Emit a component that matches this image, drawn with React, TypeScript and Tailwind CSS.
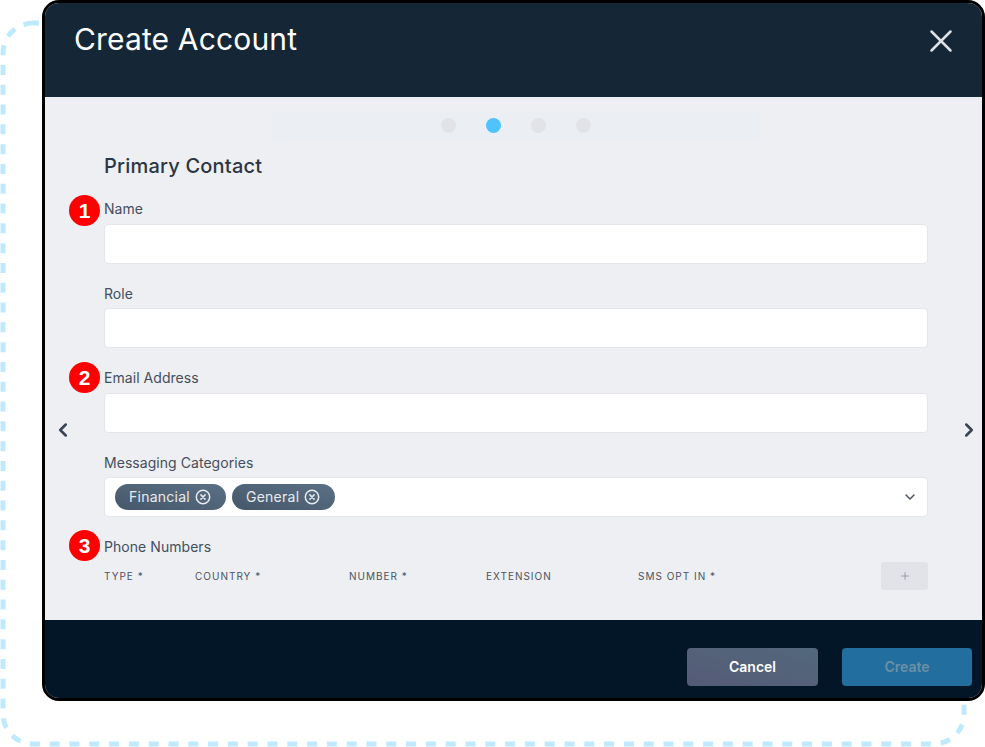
import { ChevronDown, ChevronLeft, ChevronRight, Plus, X } from "lucide-react";

const inter = "font-['Inter','Liberation_Sans',sans-serif]";

function Marker({ n, className }: { n: number; className: string }) {
  return (
    <div
      className={`absolute flex h-[31px] w-[31px] items-center justify-center rounded-full bg-[#fe0000] font-['Liberation_Sans',sans-serif] text-[21px] font-bold text-white ${className}`}
    >
      {n}
    </div>
  );
}

function Field({ label, children }: { label: string; children?: React.ReactNode }) {
  return (
    <div>
      <div className="mb-[4.6px] h-5 text-sm leading-5 tracking-[0.05px] text-[#444e5d]">{label}</div>
      <div className="flex h-10 items-center rounded-[4px] border border-[#e3e5ea] bg-white pl-[10px] pr-[9px]">
        {children}
      </div>
    </div>
  );
}

function Tag({ label }: { label: string }) {
  return (
    <span className="flex h-[26px] items-center gap-[5px] rounded-full bg-gradient-to-tr from-[#46586a] to-[#5a7085] pl-[14px] pr-[15px] text-sm tracking-[0.25px] text-[#e7ebef]">
      {label}
      <svg width="16" height="16" viewBox="0 0 16 16" fill="none" stroke="#e7ebef" strokeWidth="1.5" strokeLinecap="round">
        <circle cx="8" cy="8" r="6.7" />
        <path d="M5.9 5.9l4.2 4.2M10.1 5.9l-4.2 4.2" />
      </svg>
    </span>
  );
}

export default function App() {
  return (
    <div className={`relative h-[747px] w-[985px] overflow-hidden bg-white ${inter}`}>
      {/* dashed outline behind the modal */}
      <svg className="absolute left-0 top-0" width="985" height="747" fill="none">
        <rect x="3" y="23" width="961" height="721" rx="30" stroke="#bfeafd" strokeWidth="5" strokeDasharray="10 9.8" strokeDashoffset="4" />
      </svg>

      <div className="relative ml-[42px] flex h-[701px] w-[943px] flex-col overflow-hidden rounded-[17px] border-[3px] border-black">
        {/* Header */}
        <div className="flex h-[94px] shrink-0 justify-between bg-[#152637] pl-[29px] pr-[22px]">
          <h1 className="mt-[14px] text-[30px] font-normal leading-[45px] tracking-[0.15px] text-white">Create Account</h1>
          <X className="mt-[19px] text-[#dde0e5]" size={38} strokeWidth={1.6} />
        </div>

        {/* Body */}
        <div className="flex h-[523px] shrink-0 bg-[#edeff3]">
          <div className="flex w-[59px] shrink-0 items-center justify-center pr-[24px] pt-[143px]">
            <ChevronLeft className="text-[#3a4452]" size={22} strokeWidth={2.8} />
          </div>

          <div className="w-[824px] shrink-0 pt-[14px]">
            {/* Step dots */}
            <div className="ml-[169px] flex h-[29px] w-[486px] items-center gap-[30px] bg-[#ebeef2] pl-[168px]">
              <span className="h-[15px] w-[15px] rounded-full bg-[#e1e3e8]" />
              <span className="h-[15px] w-[15px] rounded-full bg-[#4fc3ff]" />
              <span className="h-[15px] w-[15px] rounded-full bg-[#e1e3e8]" />
              <span className="h-[15px] w-[15px] rounded-full bg-[#e1e3e8]" />
            </div>

            <h2 className="mt-[12px] text-xl font-medium leading-[28px] tracking-[0.2px] text-[#2b3544]">Primary Contact</h2>

            <div className="mt-[19.4px] flex flex-col gap-[19.8px]">
              <Field label="Name" />
              <Field label="Role" />
              <Field label="Email Address" />
              <Field label="Messaging Categories">
                <div className="flex flex-1 items-center gap-[6px]">
                  <Tag label="Financial" />
                  <Tag label="General" />
                </div>
                <ChevronDown className="text-[#4a5361]" size={16} strokeWidth={2.2} />
              </Field>
              <div className="h-5 text-sm leading-5 tracking-[0.05px] text-[#444e5d]">Phone Numbers</div>
            </div>

            {/* Phone table header */}
            <div className="mt-[5px] grid h-7 grid-cols-[91px_154px_137px_152px_1fr_47px] items-center text-[10px] tracking-[1px] text-[#4b5361]">
              <span className="pt-[1px]">TYPE *</span>
              <span className="pt-[1px]">COUNTRY *</span>
              <span className="pt-[1px]">NUMBER *</span>
              <span className="pt-[1px]">EXTENSION</span>
              <span className="pt-[1px]">SMS OPT IN *</span>
              <button className="flex h-7 items-center justify-center rounded-[3px] bg-[#e1e3e8] text-[#7b818c]">
                <Plus size={12} strokeWidth={1.3} />
              </button>
            </div>
          </div>

          <div className="flex flex-1 items-center justify-center pl-[27px] pt-[143px]">
            <ChevronRight className="text-[#3a4452]" size={22} strokeWidth={2.8} />
          </div>
        </div>

        {/* Footer */}
        <div className="flex flex-1 items-start justify-end gap-6 bg-[#021627] pr-[10px] pt-[28px]">
          <button className="h-[38px] w-[131px] rounded-[4px] bg-gradient-to-tr from-[#555a76] to-[#52687c] text-sm font-semibold text-white">
            Cancel
          </button>
          <button className="h-[38px] w-[130px] rounded-[4px] bg-[#226f9f] text-sm font-semibold text-[#6f8ea3]">
            Create
          </button>
        </div>
      </div>

      {/* Numbered annotations */}
      <Marker n={1} className="left-[69px] top-[195px]" />
      <Marker n={2} className="left-[69px] top-[362px]" />
      <Marker n={3} className="left-[69px] top-[530px]" />
    </div>
  );
}
